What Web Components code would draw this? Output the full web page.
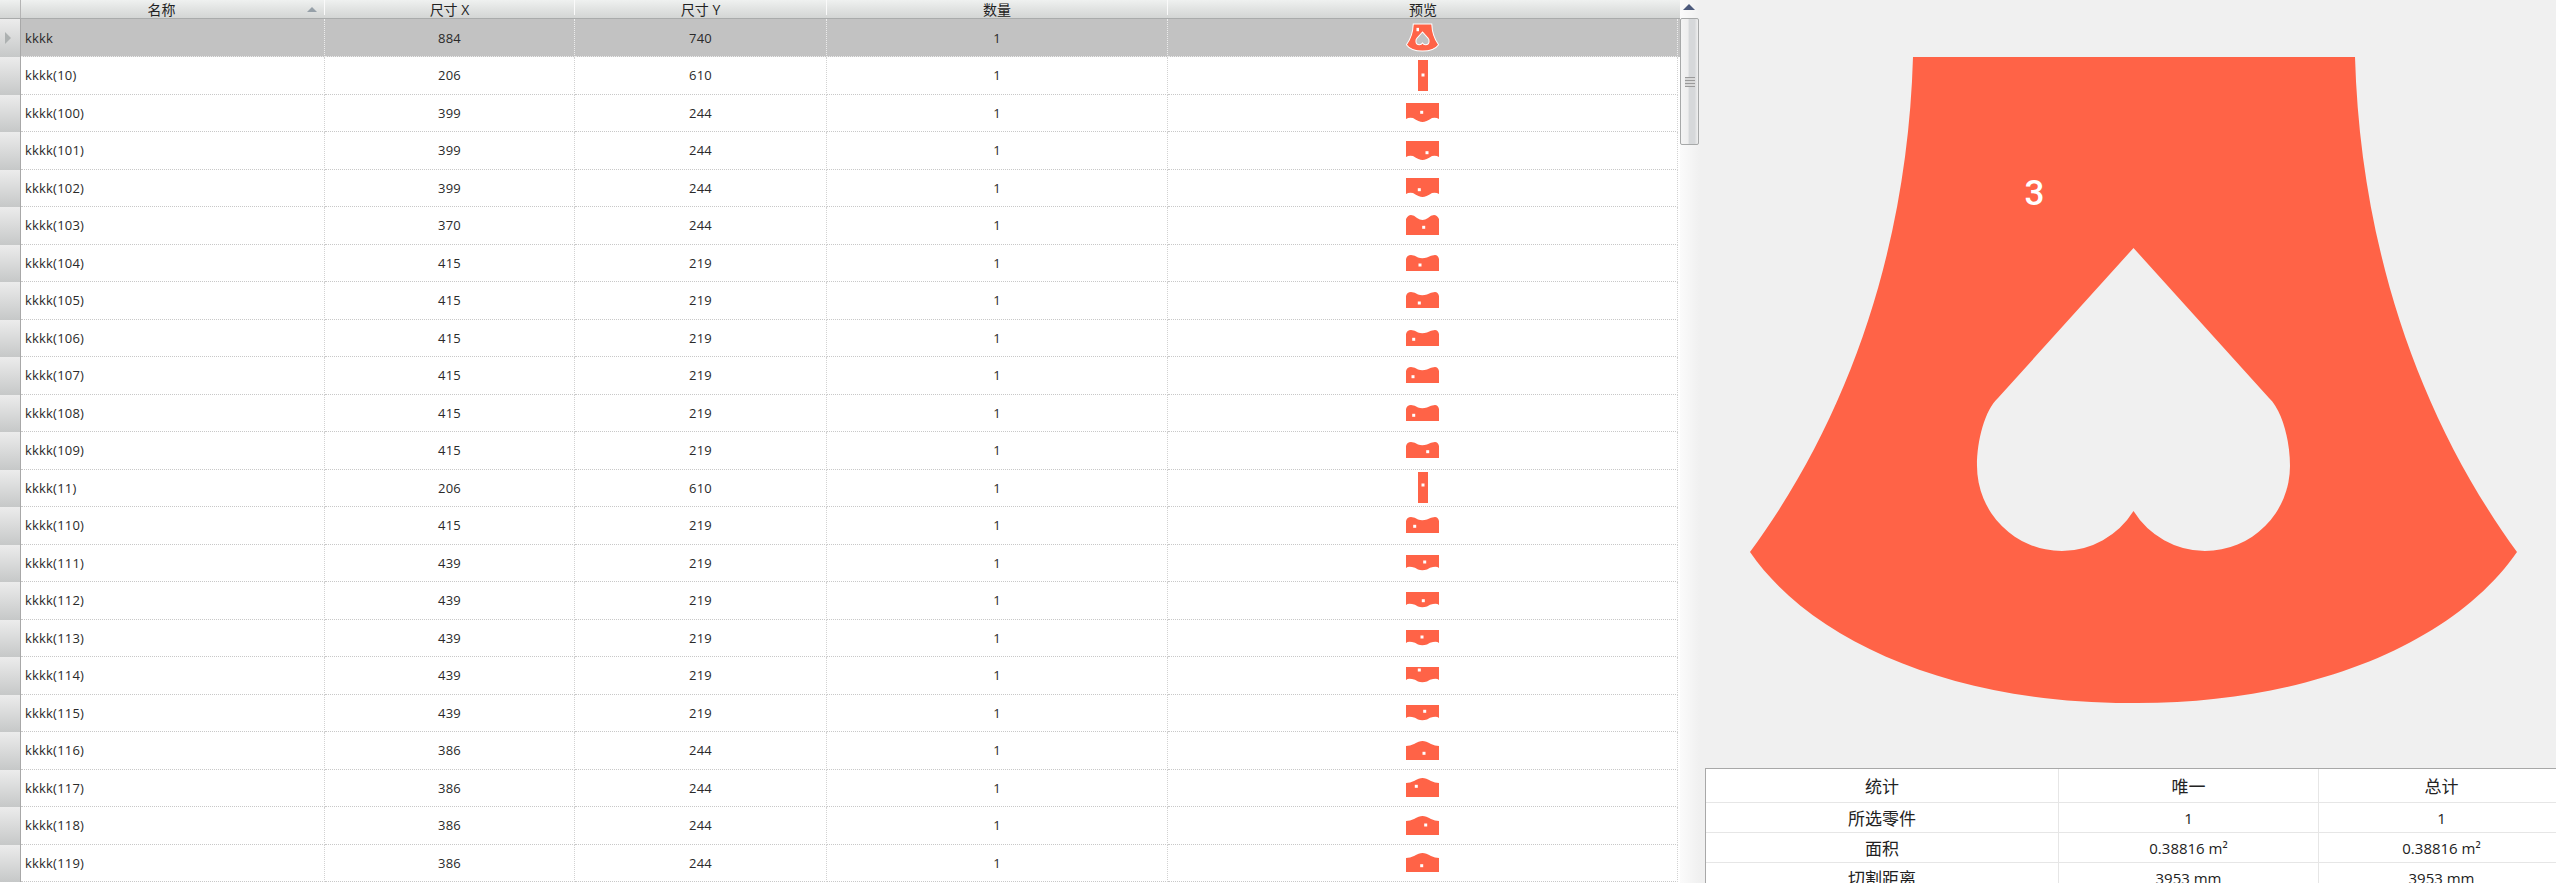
<!DOCTYPE html>
<html>
<head>
<meta charset="utf-8">
<title>parts</title>
<style>
html, body { margin: 0; height: 883px; overflow: hidden; background: #f0f0f0; }
body { font-family: "Open Sans", "Noto Sans CJK SC", sans-serif; }
</style>
</head>
<body>
<nest-app>
  <part-table slot="table">
    <part-row selected name="kkkk" x="884" y="740"><part-thumb kind="heart"></part-thumb></part-row>
    <part-row name="kkkk(10)" x="206" y="610"><part-thumb kind="tall" hx="5" hy="15"></part-thumb></part-row>
    <part-row name="kkkk(100)" x="399" y="244"><part-thumb kind="c" hx="15.7" hy="9.3"></part-thumb></part-row>
    <part-row name="kkkk(101)" x="399" y="244"><part-thumb kind="c" hx="21" hy="11.7"></part-thumb></part-row>
    <part-row name="kkkk(102)" x="399" y="244"><part-thumb kind="c" hx="13.3" hy="11.7"></part-thumb></part-row>
    <part-row name="kkkk(103)" x="370" y="244"><part-thumb kind="d" hx="17.7" hy="12.3"></part-thumb></part-row>
    <part-row name="kkkk(104)" x="415" y="219"><part-thumb kind="e" hx="14" hy="10"></part-thumb></part-row>
    <part-row name="kkkk(105)" x="415" y="219"><part-thumb kind="e" hx="13.3" hy="11"></part-thumb></part-row>
    <part-row name="kkkk(106)" x="415" y="219"><part-thumb kind="e" hx="7.7" hy="9.3"></part-thumb></part-row>
    <part-row name="kkkk(107)" x="415" y="219"><part-thumb kind="e" hx="7" hy="9.7"></part-thumb></part-row>
    <part-row name="kkkk(108)" x="415" y="219"><part-thumb kind="e" hx="7.7" hy="10.3"></part-thumb></part-row>
    <part-row name="kkkk(109)" x="415" y="219"><part-thumb kind="e" hx="21.7" hy="9.7"></part-thumb></part-row>
    <part-row name="kkkk(11)" x="206" y="610"><part-thumb kind="tall" hx="5" hy="13"></part-thumb></part-row>
    <part-row name="kkkk(110)" x="415" y="219"><part-thumb kind="e" hx="8.7" hy="9.3"></part-thumb></part-row>
    <part-row name="kkkk(111)" x="439" y="219"><part-thumb kind="f" hx="18.7" hy="7"></part-thumb></part-row>
    <part-row name="kkkk(112)" x="439" y="219"><part-thumb kind="f" hx="17.3" hy="8.7"></part-thumb></part-row>
    <part-row name="kkkk(113)" x="439" y="219"><part-thumb kind="f" hx="16" hy="7"></part-thumb></part-row>
    <part-row name="kkkk(114)" x="439" y="219"><part-thumb kind="f" hx="13.3" hy="3"></part-thumb></part-row>
    <part-row name="kkkk(115)" x="439" y="219"><part-thumb kind="f" hx="18.7" hy="6.3"></part-thumb></part-row>
    <part-row name="kkkk(116)" x="386" y="244"><part-thumb kind="g" hx="18" hy="12.3"></part-thumb></part-row>
    <part-row name="kkkk(117)" x="386" y="244"><part-thumb kind="g" hx="10.3" hy="8.3"></part-thumb></part-row>
    <part-row name="kkkk(118)" x="386" y="244"><part-thumb kind="g" hx="19.7" hy="9"></part-thumb></part-row>
    <part-row name="kkkk(119)" x="386" y="244"><part-thumb kind="g" hx="15.7" hy="12.7"></part-thumb></part-row>
  </part-table>
  <grid-scroll slot="scroll"></grid-scroll>
  <part-preview slot="preview"></part-preview>
  <stats-table slot="stats">
    <stats-row a="统计" b="唯一" c="总计"></stats-row>
    <stats-row a="所选零件" b="1" c="1"></stats-row>
    <stats-row a="面积" b="0.38816 m²" c="0.38816 m²"></stats-row>
    <stats-row a="切割距离" b="3953 mm" c="3953 mm"></stats-row>
  </stats-table>
</nest-app>

<script>
const COLUMNS = '21px 304px 250px 252px 341px 510px';

// outline of the selected part, in the coordinates of the preview pane
const OUTLINE = 'M1913 57H2355C2360 230 2410 405 2517 552C2455 642 2312 704 2133 703C1955 704 1812 642 1750 552C1858 405 1908 230 1913 57Z';
const HOLE = 'M2133.5 248L1998 398C1985 410 1977 440 1977 466A85 85 0 0 0 2062 551A85 85 0 0 0 2133.5 511A85 85 0 0 0 2205 551A85 85 0 0 0 2290 466C2290 440 2282 410 2269 398Z';

const THUMBS = {
    tall: { w: 10, h: 31, d: 'M0 0H10V31H0Z' },
    c: { w: 33, h: 19, d: 'M0 0H33V16Q30 14 26 15Q20 19 16.5 19Q13 19 7 15Q3 14 0 16Z' },
    d: { w: 33, h: 20, d: 'M0 20V4Q2 0 5 0Q8 0 11 3Q14 5 16.5 5Q19 5 22 3Q25 0 28 0Q31 0 33 4V20Z' },
    e: { w: 33, h: 16, d: 'M0 16V4Q1 0 5 0Q9 0 12 2.5Q16 4 21 2.5Q25 0 29 0Q32 0 33 4V16Z' },
    f: { w: 33, h: 16, d: 'M0 0H33V13Q31 11 27 12Q24 12 21 14.5Q16 16 12 14.5Q9 12 6 12Q2 11 0 13Z' },
    g: { w: 33, h: 19, d: 'M0 19H33V5Q29 5 25 3Q20 0 16.5 0Q13 0 8 3Q4 5 0 5Z' },
};

const appTemplate = document.createElement('template');
appTemplate.innerHTML = `
<style>
:host { display: flex; width: 2556px; height: 883px; overflow: hidden; }
.left { width: 1680px; flex: none; }
.bar { width: 20px; flex: none; }
.right { flex: 1; min-width: 0; display: flex; flex-direction: column; }
.canvas { height: 768px; flex: none; }
.bottom { flex: 1; min-height: 0; padding-left: 5px; overflow: hidden; }
</style>
<div class="left"><slot name="table"></slot></div>
<div class="bar"><slot name="scroll"></slot></div>
<div class="right">
    <div class="canvas"><slot name="preview"></slot></div>
    <div class="bottom"><slot name="stats"></slot></div>
</div>
`;

class NestApp extends HTMLElement {
    constructor() {
        super();
        this.attachShadow({ mode: 'open' });
        this.shadowRoot.appendChild(appTemplate.content.cloneNode(true));
    }
}

const tableTemplate = document.createElement('template');
tableTemplate.innerHTML = `
<style>
:host { display: block; height: 883px; overflow: hidden; background: #fff; color: #222; }
.head {
    display: grid;
    grid-template-columns: ${COLUMNS};
    height: 19px;
    box-sizing: border-box;
    border-bottom: 1px solid #a9abab;
    background: linear-gradient(#eff1f0, #d3d5d4);
    font-size: 14px;
    line-height: 19px;
    text-align: center;
}
.head > div { position: relative; height: 15px; border-right: 1px solid #fafafa; white-space: nowrap; }
.head > div:last-child { border-right: 0; }
.head .corner { border-right: 1px solid #b4b4b4; height: 18px; }
.head .sorted { box-sizing: border-box; padding-right: 22px; }
.sort {
    position: absolute;
    right: 7px;
    top: 7px;
    border-left: 5px solid transparent;
    border-right: 5px solid transparent;
    border-bottom: 5px solid #96a0a8;
}
</style>
<div class="head">
    <div class="corner"></div>
    <div class="sorted">名称<span class="sort"></span></div>
    <div>尺寸 X</div>
    <div>尺寸 Y</div>
    <div>数量</div>
    <div>预览</div>
</div>
<slot></slot>
`;

class PartTable extends HTMLElement {
    constructor() {
        super();
        this.attachShadow({ mode: 'open' });
        this.shadowRoot.appendChild(tableTemplate.content.cloneNode(true));
    }
}

const rowTemplate = document.createElement('template');
rowTemplate.innerHTML = `
<style>
:host { display: block; height: 37.5px; }
:host([selected]) { height: 38px; }
.row {
    display: grid;
    grid-template-columns: ${COLUMNS};
    height: 100%;
    font-size: 13px;
    letter-spacing: 0.2px;
    color: #2a2a2a;
}
:host([selected]) .row { background: #c2c2c2; }
.cell {
    box-sizing: border-box;
    display: flex;
    align-items: center;
    justify-content: center;
    border-right: 1px dotted #d2d2d2;
    border-bottom: 1px dotted #c8c8c8;
    overflow: hidden;
}
:host([selected]) .cell { border-color: #ececec; }
.side {
    background: linear-gradient(#ececec, #c6c8c8);
    border: 0;
    border-right: 1px solid #a8a8a8;
    justify-content: flex-start;
    padding-left: 5px;
}
:host([selected]) .side { border-color: #a8a8a8; }
.mark {
    display: none;
    border-top: 6px solid transparent;
    border-bottom: 6px solid transparent;
    border-left: 6px solid #adb1b1;
}
:host([selected]) .mark { display: block; }
.name { justify-content: flex-start; padding-left: 4px; }
</style>
<div class="row">
    <div class="cell side"><span class="mark"></span></div>
    <div class="cell name"></div>
    <div class="cell size-x"></div>
    <div class="cell size-y"></div>
    <div class="cell">1</div>
    <div class="cell"><slot></slot></div>
</div>
`;

class PartRow extends HTMLElement {
    constructor() {
        super();
        this.attachShadow({ mode: 'open' });
        this.shadowRoot.appendChild(rowTemplate.content.cloneNode(true));
    }

    connectedCallback() {
        this.shadowRoot.querySelector('.name').textContent = this.getAttribute('name');
        this.shadowRoot.querySelector('.size-x').textContent = this.getAttribute('x');
        this.shadowRoot.querySelector('.size-y').textContent = this.getAttribute('y');
    }
}

class PartThumb extends HTMLElement {
    constructor() {
        super();
        this.attachShadow({ mode: 'open' });
    }

    connectedCallback() {
        const kind = this.getAttribute('kind');
        let svg;
        if (kind === 'heart') {
            svg = `<svg width="33" height="29" viewBox="1740 47 787 665">
                <path d="${OUTLINE} ${HOLE}" fill="#ff6347" fill-rule="evenodd" stroke="#fff" stroke-width="24"/>
                <rect x="1990" y="150" width="60" height="80" fill="#fff"/>
            </svg>`;
        } else {
            const t = THUMBS[kind];
            const hx = parseFloat(this.getAttribute('hx'));
            const hy = parseFloat(this.getAttribute('hy'));
            svg = `<svg width="${t.w}" height="${t.h}" viewBox="0 0 ${t.w} ${t.h}">
                <path d="${t.d}" fill="#ff6347"/>
                <rect x="${hx - 1.5}" y="${hy - 1.5}" width="3" height="3" fill="#fff"/>
            </svg>`;
        }
        this.shadowRoot.innerHTML = `<style>:host { display: block; line-height: 0; filter: blur(0.35px); }</style>${svg}`;
    }
}

const scrollTemplate = document.createElement('template');
scrollTemplate.innerHTML = `
<style>
:host { display: block; height: 883px; background: linear-gradient(90deg, #fbfbfb, #f0f0f0); }
.up {
    width: 0;
    margin: 0 0 0 3px;
    border-left: 6px solid transparent;
    border-right: 6px solid transparent;
    border-bottom: 6px solid #4d5a7c;
    position: relative;
    top: 4px;
}
.thumb {
    box-sizing: border-box;
    width: 19px;
    height: 127px;
    margin-top: 12px;
    display: flex;
    align-items: center;
    justify-content: center;
    border: 1px solid #a6a8a8;
    border-radius: 2px;
    background: linear-gradient(90deg, #f4f4f4 0, #eeeeee 40%, #d6d8da 50%, #d6d8da 80%, #f0f0f0 100%);
}
.grip {
    width: 10px;
    height: 10px;
    background: repeating-linear-gradient(#9a9a9a 0 1px, #d8d8d8 1px 3px);
}
</style>
<div class="up"></div>
<div class="thumb"><div class="grip"></div></div>
`;

class GridScroll extends HTMLElement {
    constructor() {
        super();
        this.attachShadow({ mode: 'open' });
        this.shadowRoot.appendChild(scrollTemplate.content.cloneNode(true));
    }
}

const previewTemplate = document.createElement('template');
previewTemplate.innerHTML = `
<style>
:host { display: block; height: 768px; }
svg { display: block; }
text { font-family: Roboto, sans-serif; font-size: 35px; font-weight: 500; fill: #fff; }
</style>
<svg width="856" height="768" viewBox="1700 0 856 768">
    <path d="${OUTLINE} ${HOLE}" fill="#ff6347" fill-rule="evenodd"/>
    <text x="2034.5" y="205" text-anchor="middle">3</text>
</svg>
`;

class PartPreview extends HTMLElement {
    constructor() {
        super();
        this.attachShadow({ mode: 'open' });
        this.shadowRoot.appendChild(previewTemplate.content.cloneNode(true));
    }
}

const statsTemplate = document.createElement('template');
statsTemplate.innerHTML = `
<style>
:host {
    display: block;
    width: 860px;
    height: 130px;
    box-sizing: border-box;
    background: #fff;
    border-top: 1px solid #a8a8a8;
    border-left: 1px solid #a8a8a8;
}
</style>
<slot></slot>
`;

class StatsTable extends HTMLElement {
    constructor() {
        super();
        this.attachShadow({ mode: 'open' });
        this.shadowRoot.appendChild(statsTemplate.content.cloneNode(true));
    }
}

const statsRowTemplate = document.createElement('template');
statsRowTemplate.innerHTML = `
<style>
:host { display: block; height: 30px; }
:host(:first-child) { height: 34px; }
.row {
    display: grid;
    grid-template-columns: 353px 260px 246px;
    height: 100%;
    box-sizing: border-box;
    border-bottom: 1px solid #e6e6e6;
    font-size: 15px;
    color: #222;
    text-align: center;
}
.row > div {
    display: flex;
    align-items: center;
    justify-content: center;
    border-right: 1px solid #e6e6e6;
    white-space: nowrap;
}
.row > .label { font-size: 17px; }
</style>
<div class="row">
    <div class="a"></div>
    <div class="b"></div>
    <div class="c"></div>
</div>
`;

class StatsRow extends HTMLElement {
    constructor() {
        super();
        this.attachShadow({ mode: 'open' });
        this.shadowRoot.appendChild(statsRowTemplate.content.cloneNode(true));
    }

    connectedCallback() {
        for (const key of ['a', 'b', 'c']) {
            const cell = this.shadowRoot.querySelector('.' + key);
            const value = this.getAttribute(key);
            cell.textContent = value;
            if (/[^\x00-\x7f²]/.test(value)) cell.classList.add('label');
        }
    }
}

customElements.define('nest-app', NestApp);
customElements.define('part-table', PartTable);
customElements.define('part-row', PartRow);
customElements.define('part-thumb', PartThumb);
customElements.define('grid-scroll', GridScroll);
customElements.define('part-preview', PartPreview);
customElements.define('stats-table', StatsTable);
customElements.define('stats-row', StatsRow);
</script>
</body>
</html>
